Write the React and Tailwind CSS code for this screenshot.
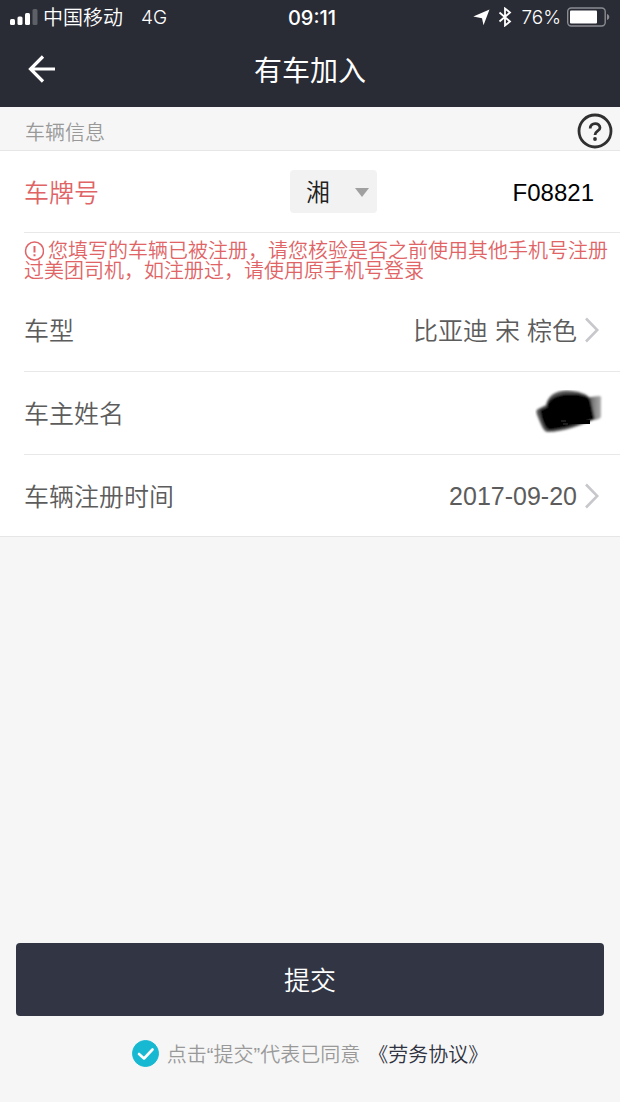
import React, { useState } from 'react';

const provinces = ['湘', '京', '沪', '粤', '浙', '苏'];

const StatusBar = () => (
  <div className="grid grid-cols-3 items-center h-[34px] px-[10px] text-white font-['Inter','Noto_Sans_CJK_SC',sans-serif]">
    <div className="flex items-center">
      <svg width="28" height="18" viewBox="0 0 28 18" fill="currentColor" aria-hidden="true">
        <rect x="0" y="11" width="5" height="6" rx="1.5" />
        <rect x="7.5" y="8.5" width="5" height="8.5" rx="1.5" />
        <rect x="15" y="5" width="5" height="12" rx="1.5" />
        <rect x="22.5" y="1" width="5" height="16" rx="1.5" opacity="0.25" />
      </svg>
      <span className="ml-[5px] pt-0.5 text-[20px] font-[350] whitespace-nowrap">中国移动</span>
      <span className="ml-[18px] pt-0.5 text-[19px] font-light">4G</span>
    </div>
    <div className="text-center text-[20px] font-medium pl-1 pt-0.5">09:11</div>
    <div className="flex items-center justify-end">
      <svg width="17" height="17" viewBox="0 0 17 17" fill="currentColor" aria-hidden="true">
        <path d="M16.5 0.5L10.5 16.2L9 9.2L0.3 7.6Z" />
      </svg>
      <svg className="ml-2" width="14" height="20" viewBox="0 0 14 20" fill="none" stroke="currentColor" strokeWidth="1.8" aria-hidden="true">
        <path d="M1.5 5.5L12 14.5L7 18.5V1.5L12 5.5L1.5 14.5" />
      </svg>
      <span className="ml-[9px] pt-0.5 text-[19px] font-light">76%</span>
      <svg className="ml-[5px] shrink-0" width="44" height="20" viewBox="0 0 44 20" aria-hidden="true">
        <rect x="1.7" y="1" width="37.5" height="18" rx="3.5" fill="none" stroke="#8b8c92" strokeWidth="1.4" />
        <rect x="4" y="3.5" width="27" height="13" rx="1" fill="#fff" />
        <path d="M41 7C44 8 44 12 41 13Z" fill="#8b8c92" />
      </svg>
    </div>
  </div>
);

const Chevron = () => (
  <svg className="ml-2 shrink-0" width="14" height="26" viewBox="0 0 14 26" fill="none" stroke="#c7c7cc" strokeWidth="2.6" aria-hidden="true">
    <path d="M1 1.5L12.3 13L1 24.5" />
  </svg>
);

// Scribble over the owner's name
const HiddenName = () => (
  <svg width="68" height="46" viewBox="0 0 68 46" role="img" aria-label="已隐藏">
    <defs>
      <filter id="soft" x="-10%" y="-10%" width="120%" height="120%">
        <feGaussianBlur stdDeviation="0.8" />
      </filter>
      <linearGradient id="tail" x1="0" x2="1">
        <stop offset="0" stopColor="#333" />
        <stop offset="1" stopColor="#b0b0b0" />
      </linearGradient>
    </defs>
    <g filter="url(#soft)">
      <path d="M48 8L64 6Q67 6 66 10L66 27Q64 30 58 30L46 33Z" fill="url(#tail)" />
      <path d="M3 19L11 15C13 6 20 1 31 0.5C43 0.5 52 4 56 9L60 29C47 35 28 42 13 42C8 42 6 34 2.5 26C1 22 1 20 3 19Z" fill="#555" />
      <path d="M5 20L12 17C12 9 22 4 34 4C44 4 53 5 55 10L59 29C43 34 28 39 14 40C10 39 8 32 6 26Z" fill="#000" />
    </g>
    <path d="M38 30H55V34H36Z" fill="#000" />
    <path d="M26 31H31M28 34H33" stroke="#3a3a3a" />
  </svg>
);

const App = () => {
  const [formData, setFormData] = useState({
    province: '湘',
    plate: 'F08821',
    agreed: true
  });

  const handleChange = (e) => {
    const { name, value, type, checked } = e.target;
    setFormData({ ...formData, [name]: type === 'checkbox' ? checked : value });
  };

  const handleSubmit = (e) => {
    e.preventDefault();
  };

  return (
    <div className="flex flex-col min-h-screen bg-[#f6f6f6] font-['Liberation_Sans','Noto_Sans_CJK_SC',sans-serif] font-[350]" lang="zh-CN">
      {/* Header */}
      <header className="bg-[#292b35] text-white">
        <StatusBar />
        <div className="grid grid-cols-[60px_1fr_60px] items-center h-[73px] pb-1">
          <button type="button" aria-label="返回" className="pl-7">
            <svg width="27" height="28" viewBox="0 0 27 28" fill="none" stroke="currentColor" strokeWidth="3.2">
              <path d="M15 1.5L2.5 14L15 26.5M2.5 14H27" />
            </svg>
          </button>
          <h1 className="pt-1.5 text-center text-[28px] leading-8 font-normal">有车加入</h1>
        </div>
      </header>

      <form onSubmit={handleSubmit} className="flex flex-col grow">
        <div className="flex items-center justify-between h-11 pt-1 pl-[25px] pr-[7px] border-b border-[#e6e6e6]">
          <h2 className="pt-1 text-[20px] font-[350] text-[#999]">车辆信息</h2>
          <button type="button" aria-label="帮助">
            <svg width="36" height="36" viewBox="0 0 36 36" fill="none" stroke="#303030">
              <circle cx="18" cy="18" r="16" strokeWidth="2.8" />
              <path d="M13.2 15.5C13.2 9 23 9 23 14.8C23 18 18 18 18 22" strokeWidth="2.8" />
              <circle cx="18" cy="26" r="1.9" fill="#303030" stroke="none" />
            </svg>
          </button>
        </div>

        <div className="bg-white border-b border-[#e6e6e6] text-[#5c5c5c] text-[25px]">
          {/* Plate number */}
          <div className="ml-6 h-[82px] pr-[26px] flex items-center border-b border-[#e8e8e8]">
            <label htmlFor="plate" className="w-[266px] shrink-0 pt-1 text-[#e06466]">车牌号</label>
            <div className="relative shrink-0">
              <select
                name="province"
                aria-label="省份"
                value={formData.province}
                onChange={handleChange}
                className="appearance-none block w-[87px] h-[43px] pt-0.5 pl-4 rounded-sm bg-[#f2f2f2] text-[24px] text-[#222]"
              >
                {provinces.map((p) => (
                  <option key={p} value={p}>{p}</option>
                ))}
              </select>
              <svg className="absolute right-2 top-[18px] pointer-events-none" width="14" height="9" viewBox="0 0 14 9" fill="#a0a0a0" aria-hidden="true">
                <path d="M0 0H14L7 9Z" />
              </svg>
            </div>
            <input
              type="text"
              id="plate"
              name="plate"
              value={formData.plate}
              onChange={handleChange}
              className="min-w-0 grow pt-0.5 text-right text-[24px] text-black bg-transparent focus:outline-none"
            />
          </div>

          {/* Error */}
          <p role="alert" className="pl-6 pr-2 py-2 text-[20px] leading-5 text-[#e06466]">
            <svg className="inline-block align-top mr-1" width="20" height="20" viewBox="0 0 20 20" fill="none" stroke="currentColor" strokeWidth="1.5" aria-hidden="true">
              <circle cx="10.5" cy="10" r="9" />
              <path d="M10.5 5V11.5M10.5 13.3V15.3" strokeWidth="2" />
            </svg>
            您填写的车辆已被注册，请您核验是否之前使用其他手机号注册过美团司机，如注册过，请使用原手机号登录
          </p>

          <div className="ml-6 h-[83px] pr-[21px] flex items-center justify-between border-b border-[#e8e8e8]">
            <span className="pt-1">车型</span>
            <button type="button" className="flex items-center">
              <span className="pt-1">比亚迪 宋 棕色</span>
              <Chevron />
            </button>
          </div>
          <div className="ml-6 h-[83px] pr-[17px] flex items-center justify-between border-b border-[#e8e8e8]">
            <span className="pt-1">车主姓名</span>
            <HiddenName />
          </div>
          <div className="ml-6 h-[81px] pr-[21px] flex items-center justify-between">
            <span className="pt-1">车辆注册时间</span>
            <button type="button" className="flex items-center">
              <span className="pt-0.5">2017-09-20</span>
              <Chevron />
            </button>
          </div>
        </div>

        {/* Submit */}
        <div className="mt-auto px-4 pb-8">
          <button type="submit" className="block w-full h-[73px] pt-1 rounded bg-[#323644] text-white text-[26px]">
            提交
          </button>
          <div className="mt-5 flex items-center justify-center text-[20px] leading-[30px]">
            <label htmlFor="agreed" className="flex items-center text-[#999]">
              <span className="relative mr-2">
                <input
                  type="checkbox"
                  id="agreed"
                  name="agreed"
                  checked={formData.agreed}
                  onChange={handleChange}
                  className="appearance-none block size-[27px] rounded-full border border-[#ccc] checked:border-[#17b9d2] checked:bg-[#17b9d2]"
                />
                {formData.agreed && (
                  <svg className="absolute inset-0 pointer-events-none" width="27" height="27" viewBox="0 0 27 27" fill="none" stroke="#fff" strokeWidth="2.6" strokeLinecap="round" strokeLinejoin="round" aria-hidden="true">
                    <path d="M7 14L12 18.5L20.5 9.5" />
                  </svg>
                )}
              </span>
              <span className="pt-1">点击“提交”代表已同意</span>
            </label>
            <a href="#" className="ml-2 pt-1 text-[#2f3240]">《劳务协议》</a>
          </div>
        </div>
      </form>
    </div>
  );
};

export default App;
